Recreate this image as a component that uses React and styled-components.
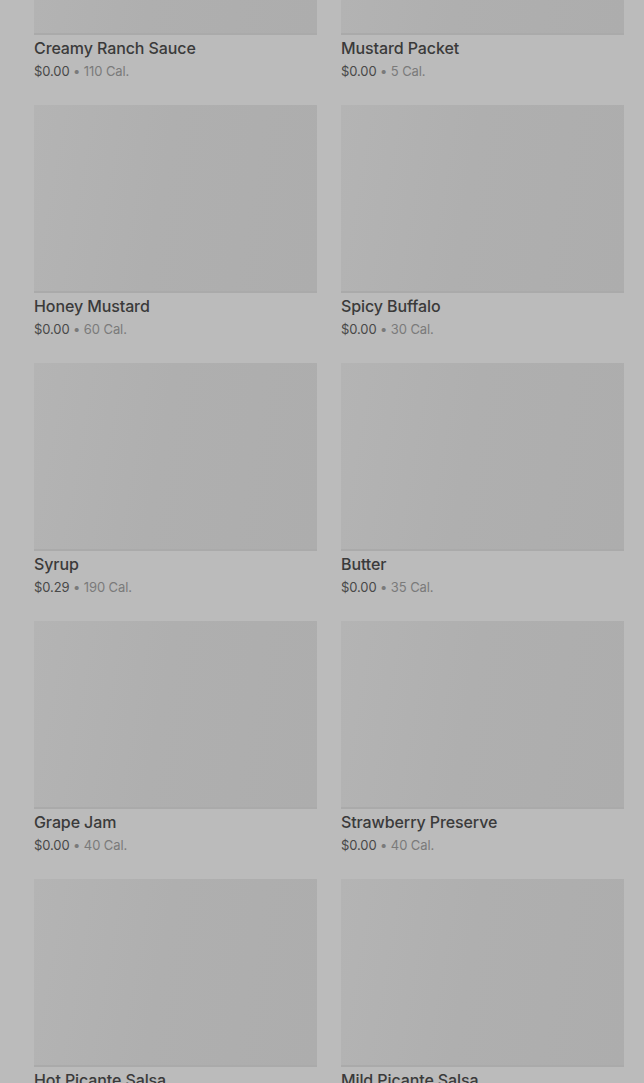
import React from "react";
import styled, { createGlobalStyle } from "styled-components";

const Global = createGlobalStyle`
  html, body {
    margin: 0;
    padding: 0;
    background: #bbbbbb;
    overflow: hidden;
  }
  * { box-sizing: border-box; }
`;

const Page = styled.div`
  height: 1083px;
  overflow: hidden;
  font-family: Inter, "Noto Sans", sans-serif;
`;

const Grid = styled.div`
  display: grid;
  grid-template-columns: 1fr 1fr;
  column-gap: 24px;
  row-gap: 24px;
  padding: 0 20px 0 34px;
  margin-top: -153px;
`;

const Card = styled.div`
  display: flex;
  flex-direction: column;
`;

const Thumb = styled.div`
  height: 188px;
  background: linear-gradient(100deg, #b4b4b4 0%, #afafaf 45%, #adadad 100%);
  box-shadow: inset 0 -2px 0 #aaaaaa;
`;

const Title = styled.div`
  margin-top: 1px;
  font-size: 16px;
  font-weight: 500;
  line-height: 24px;
  color: #3a3a3a;
  letter-spacing: -0.1px;
`;

const Meta = styled.div`
  margin-top: 1px;
  font-size: 13px;
  line-height: 20px;
  color: #7a7a7a;
  letter-spacing: -0.1px;
`;

const Price = styled.span`
  color: #484848;
`;

const items = [
  ["Creamy Ranch Sauce", "$0.00", "110"],
  ["Mustard Packet", "$0.00", "5"],
  ["Honey Mustard", "$0.00", "60"],
  ["Spicy Buffalo", "$0.00", "30"],
  ["Syrup", "$0.29", "190"],
  ["Butter", "$0.00", "35"],
  ["Grape Jam", "$0.00", "40"],
  ["Strawberry Preserve", "$0.00", "40"],
  ["Hot Picante Salsa", "$0.00", "10"],
  ["Mild Picante Salsa", "$0.00", "10"],
];

export default function App() {
  return (
    <Page>
      <Global />
      <Grid>
        {items.map(([name, price, cal]) => (
          <Card key={name}>
            <Thumb />
            <Title>{name}</Title>
            <Meta>
              <Price>{price}</Price> • {cal} Cal.
            </Meta>
          </Card>
        ))}
      </Grid>
    </Page>
  );
}
